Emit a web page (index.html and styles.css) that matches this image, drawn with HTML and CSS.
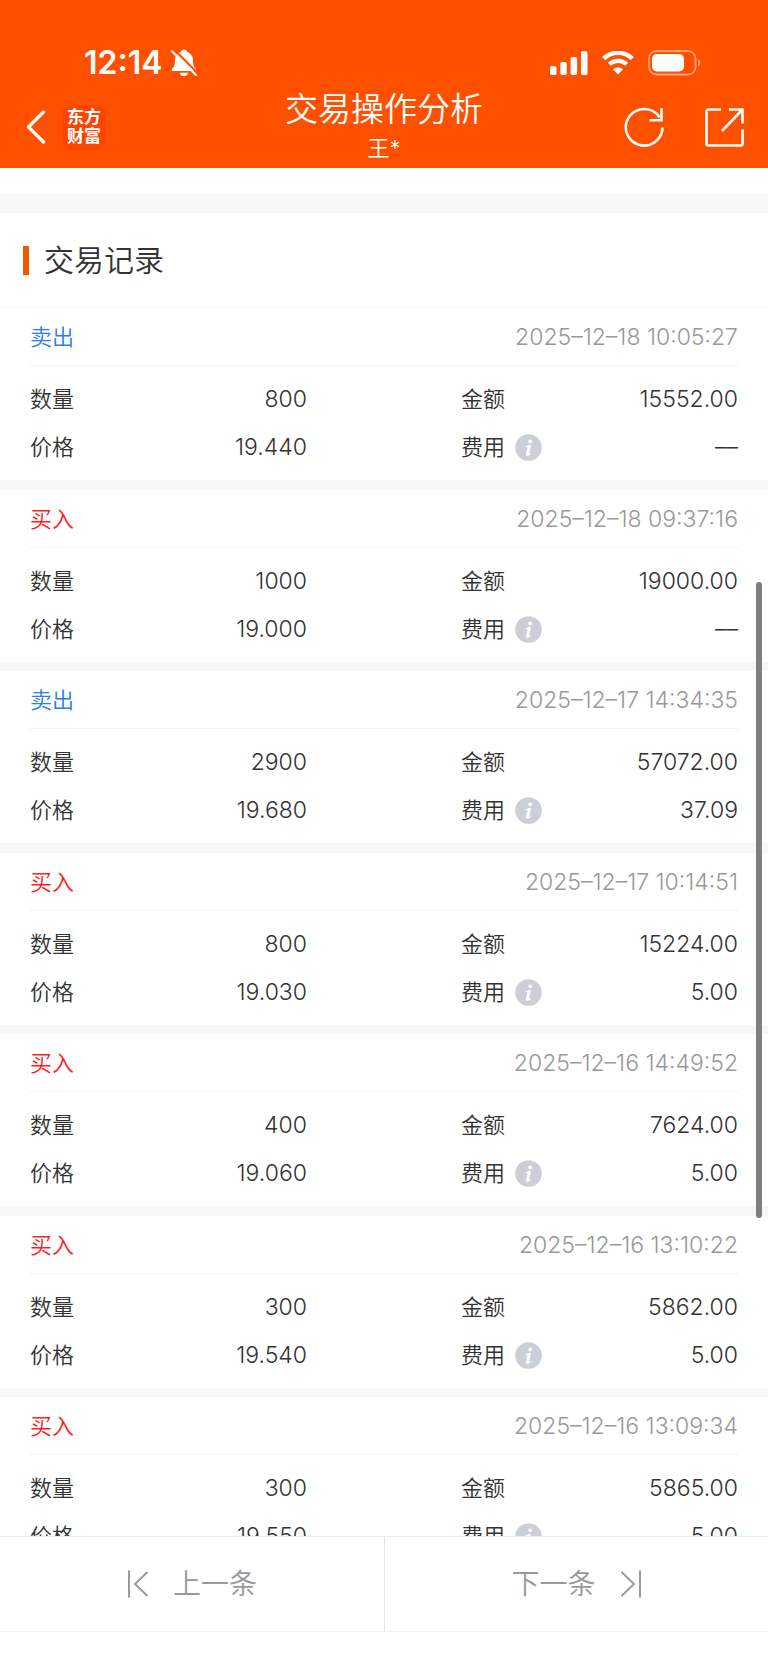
FILE: index.html
```html
<!DOCTYPE html>
<html lang="zh-CN">
<head>
<meta charset="utf-8">
<meta name="viewport" content="width=device-width, initial-scale=1">
<title>交易操作分析</title>
<link rel="stylesheet" href="styles.css">
</head>
<body>
<svg class="defs" width="0" height="0" aria-hidden="true">
  <symbol id="info" viewBox="0 0 27 27">
    <circle cx="13.5" cy="13.5" r="13.3" fill="#cbcfd6"/>
    <circle cx="15.2" cy="7.4" r="1.9" fill="#fff"/>
    <path d="M10.2 12.6c1.5-.9 3.200-1.500 4.500-1.500 1 0 1.300.6 1.100 1.500l-1.700 6.700c-.1.500.1.600.5.400l1.200-.8.500.6c-1.400 1.500-2.800 2.300-4.100 2.300-1.200 0-1.600-.7-1.300-1.900l1.600-6.100c.1-.5 0-.7-.5-.7l-1.600.2z" fill="#fff"/>
  </symbol>
</svg>
<div class="page">
  <header class="top">
    <div class="status">
      <div class="status-left">
        <span class="clock">12:14</span>
        <svg width="26" height="28" viewBox="0 0 26 28" aria-hidden="true">
          <path d="M13 .5c1.700 0 3 1.100 3.200 2.500 3.900 1.300 5.800 4.400 5.800 8.400 0 4.300.8 6.300 2.700 8.300.8.900.4 2.300-.9 2.300H1.900C.6 22 .3 20.600 1.100 19.700 3.200 17.600 4 15.700 4 11.400 4 7.400 5.900 4.300 9.800 3 10 1.600 11.300.5 13 .5z" fill="#fff"/>
          <path d="M8.800 23.700h8.300c-.3 2-2 3.600-4.200 3.600s-3.800-1.600-4.100-3.600z" fill="#fff"/>
          <path d="M2.500 0L26.500 24" stroke="#ff5000" stroke-width="2.200"/>
          <path d="M1 2.200L25 26" stroke="#fff" stroke-width="2.100" stroke-linecap="round"/>
        </svg>
      </div>
      <div class="status-right">
        <svg width="38" height="24" viewBox="0 0 38 24" fill="#fff" aria-hidden="true">
          <rect x="0" y="15" width="6.500" height="9" rx="1.800"/>
          <rect x="10.300" y="11" width="6.500" height="13" rx="1.800"/>
          <rect x="20.600" y="6" width="6.500" height="18" rx="1.800"/>
          <rect x="31" y="0" width="6.500" height="24" rx="1.800"/>
        </svg>
        <svg width="32" height="24" viewBox="0 0 32 24" aria-hidden="true">
          <path d="M1.700 7.600a20.600 20.600 0 0 1 28.600 0" fill="none" stroke="#fff" stroke-width="4.400"/>
          <path d="M7.300 13.300a12.700 12.700 0 0 1 17.400 0" fill="none" stroke="#fff" stroke-width="4.200"/>
          <path d="M16 23.500l-5-5.200c2.900-2.300 7.100-2.300 10 0z" fill="#fff"/>
        </svg>
        <svg width="53" height="26" viewBox="0 0 53 26" aria-hidden="true">
          <rect x="1" y="1" width="46.500" height="23.500" rx="7.500" fill="none" stroke="#fff" stroke-opacity=".45" stroke-width="1.800"/>
          <rect x="4" y="4" width="32" height="17.500" rx="5" fill="#fff"/>
          <path d="M50 9c3 1 3 6.500 0 7.500z" fill="#fff" fill-opacity=".5"/>
        </svg>
      </div>
    </div>
    <div class="nav">
      <div class="nav-side">
        <button class="icon-btn back" type="button" aria-label="返回">
          <svg width="20" height="34" viewBox="0 0 20 34" aria-hidden="true"><path d="M17.500 2L2.500 17l15 15" fill="none" stroke="#fff" stroke-width="3.200" stroke-linecap="round" stroke-linejoin="round"/></svg>
        </button>
        <div class="logo"><span>东方</span><span>财富</span></div>
      </div>
      <div class="nav-title">
        <h1>交易操作分析</h1>
        <p>王*</p>
      </div>
      <div class="nav-side nav-actions">
        <button class="icon-btn" type="button" aria-label="刷新">
          <svg width="40" height="40" viewBox="0 0 40 40" fill="none" stroke="#fff" stroke-width="2.600" aria-hidden="true"><path d="M38.500 20.500A18.300 18.300 0 1 1 35.500 10.200"/><path d="M37.500 1.300v11.900H25.500"/></svg>
        </button>
        <button class="icon-btn" type="button" aria-label="分享">
          <svg width="40" height="40" viewBox="0 0 40 40" fill="none" stroke="#fff" stroke-width="2.600" aria-hidden="true"><path d="M17 2.500H4.500a2 2 0 0 0-2 2V36.500a2 2 0 0 0 2 2H36.500a2 2 0 0 0 2-2V22.500"/><path d="M25 2.500H38.500V16.500M38 3L18 24"/></svg>
        </button>
      </div>
    </div>
  </header>

  <main class="content">
    <div class="spacer"></div>
    <h2 class="section-title">交易记录</h2>
    <div class="records">
      <article class="record">
        <div class="record-head"><span class="sell">卖出</span><time>2025–12–18 10:05:27</time></div>
        <dl>
          <div><dt>数量</dt><dd>800</dd></div>
          <div><dt>金额</dt><dd>15552.00</dd></div>
          <div><dt>价格</dt><dd>19.440</dd></div>
          <div><dt>费用<button class="info" type="button" aria-label="费用说明"><svg><use href="#info"/></svg></button></dt><dd>––</dd></div>
        </dl>
      </article>
      <article class="record">
        <div class="record-head"><span class="buy">买入</span><time>2025–12–18 09:37:16</time></div>
        <dl>
          <div><dt>数量</dt><dd>1000</dd></div>
          <div><dt>金额</dt><dd>19000.00</dd></div>
          <div><dt>价格</dt><dd>19.000</dd></div>
          <div><dt>费用<button class="info" type="button" aria-label="费用说明"><svg><use href="#info"/></svg></button></dt><dd>––</dd></div>
        </dl>
      </article>
      <article class="record">
        <div class="record-head"><span class="sell">卖出</span><time>2025–12–17 14:34:35</time></div>
        <dl>
          <div><dt>数量</dt><dd>2900</dd></div>
          <div><dt>金额</dt><dd>57072.00</dd></div>
          <div><dt>价格</dt><dd>19.680</dd></div>
          <div><dt>费用<button class="info" type="button" aria-label="费用说明"><svg><use href="#info"/></svg></button></dt><dd>37.09</dd></div>
        </dl>
      </article>
      <article class="record">
        <div class="record-head"><span class="buy">买入</span><time>2025–12–17 10:14:51</time></div>
        <dl>
          <div><dt>数量</dt><dd>800</dd></div>
          <div><dt>金额</dt><dd>15224.00</dd></div>
          <div><dt>价格</dt><dd>19.030</dd></div>
          <div><dt>费用<button class="info" type="button" aria-label="费用说明"><svg><use href="#info"/></svg></button></dt><dd>5.00</dd></div>
        </dl>
      </article>
      <article class="record">
        <div class="record-head"><span class="buy">买入</span><time>2025–12–16 14:49:52</time></div>
        <dl>
          <div><dt>数量</dt><dd>400</dd></div>
          <div><dt>金额</dt><dd>7624.00</dd></div>
          <div><dt>价格</dt><dd>19.060</dd></div>
          <div><dt>费用<button class="info" type="button" aria-label="费用说明"><svg><use href="#info"/></svg></button></dt><dd>5.00</dd></div>
        </dl>
      </article>
      <article class="record">
        <div class="record-head"><span class="buy">买入</span><time>2025–12–16 13:10:22</time></div>
        <dl>
          <div><dt>数量</dt><dd>300</dd></div>
          <div><dt>金额</dt><dd>5862.00</dd></div>
          <div><dt>价格</dt><dd>19.540</dd></div>
          <div><dt>费用<button class="info" type="button" aria-label="费用说明"><svg><use href="#info"/></svg></button></dt><dd>5.00</dd></div>
        </dl>
      </article>
      <article class="record">
        <div class="record-head"><span class="buy">买入</span><time>2025–12–16 13:09:34</time></div>
        <dl>
          <div><dt>数量</dt><dd>300</dd></div>
          <div><dt>金额</dt><dd>5865.00</dd></div>
          <div><dt>价格</dt><dd>19.550</dd></div>
          <div><dt>费用<button class="info" type="button" aria-label="费用说明"><svg><use href="#info"/></svg></button></dt><dd>5.00</dd></div>
        </dl>
      </article>
    </div>
    <div class="scroll-thumb"></div>
  </main>

  <nav class="pager">
    <button type="button">
      <svg width="22" height="28" viewBox="0 0 22 28" fill="none" stroke="#999" stroke-width="1.900" aria-hidden="true"><path d="M2 .5v27M20.500 2L8 14l12.500 12"/></svg>
      上一条
    </button>
    <button type="button">
      下一条
      <svg width="22" height="28" viewBox="0 0 22 28" fill="none" stroke="#999" stroke-width="1.900" aria-hidden="true"><path d="M20 .5v27M1.500 2L14 14 1.500 26"/></svg>
    </button>
  </nav>
</div>
</body>
</html>
```
FILE: styles.css
```css
* {
  box-sizing: border-box;
}

body,
h1,
h2,
p,
dl,
dd {
  margin: 0;
}

body {
  background: #fff;
  color: #333;
  font-family: Inter, "Noto Sans CJK SC", sans-serif;
  font-size: 23px;
  font-weight: 350;
  line-height: 32px;
}

button {
  padding: 0;
  border: 0;
  background: none;
  color: inherit;
  font: inherit;
}

svg {
  display: block;
}

.defs {
  position: absolute;
}

.page {
  display: flex;
  flex-direction: column;
  height: 100vh;
  padding-bottom: 38px;
}

.top {
  flex: none;
  padding: 44px 24px 0;
  height: 168px;
  background: #ff5000;
  color: #fff;
}

.status {
  display: flex;
  justify-content: space-between;
  align-items: center;
  height: 38px;
  padding: 0 43px 0 60px;
}

.status-left,
.status-right {
  display: flex;
  align-items: center;
}

.status-left {
  gap: 8px;
}

.status-right {
  gap: 14px;
}

.clock {
  font-size: 32px;
  font-weight: 600;
  line-height: 38px;
}

.nav {
  display: grid;
  grid-template-columns: 1fr auto 1fr;
  align-items: center;
  height: 90px;
}

.nav-side {
  display: flex;
  align-items: center;
  gap: 16px;
}

.nav-actions {
  justify-content: flex-end;
  gap: 40px;
}

.back {
  margin-left: 2px;
}

.logo {
  display: flex;
  flex-direction: column;
  justify-content: center;
  align-items: center;
  width: 44px;
  height: 45px;
  border-radius: 9px;
  background: #ff4400;
  font-size: 17px;
  font-weight: 700;
  line-height: 19px;
}

.nav-title {
  text-align: center;
}

.nav-title h1 {
  font-size: 33px;
  font-weight: 350;
  line-height: 42px;
}

.nav-title p {
  font-size: 22px;
  line-height: 36px;
}

.content {
  position: relative;
  flex: 1;
  min-height: 0;
  overflow: hidden;
}

.spacer {
  height: 19px;
  margin-top: 26px;
  background: #f7f7f7;
}

.section-title {
  display: flex;
  align-items: center;
  gap: 15px;
  height: 95px;
  padding-left: 23px;
  border-bottom: 1px solid #f5f5f5;
  font-size: 30px;
  font-weight: 350;
}

.section-title::before {
  content: "";
  width: 6px;
  height: 29px;
  background: #f05a00;
}

.record {
  border-bottom: 10px solid #f7f7f7;
}

.record:nth-child(even) {
  border-bottom-width: 9px;
}

.record-head {
  display: flex;
  justify-content: space-between;
  align-items: center;
  height: 58px;
  margin: 0 30px;
  border-bottom: 1px solid #f2f2f2;
}

.sell,
.buy {
  font-size: 22px;
}

.sell {
  color: #2b7de9;
}

.buy {
  color: #fb1f1f;
}

time {
  color: #999;
}

dl {
  display: grid;
  grid-template-columns: 1fr 1fr;
  column-gap: 154px;
  padding: 9px 30px;
}

dl > div {
  display: flex;
  justify-content: space-between;
  align-items: center;
  height: 48px;
}

dt {
  display: flex;
  align-items: center;
  gap: 10px;
  font-size: 22px;
}

dd {
  font-weight: 300;
}

.info svg {
  width: 27px;
  height: 27px;
}

.scroll-thumb {
  position: absolute;
  top: 414px;
  right: 6px;
  width: 6px;
  height: 636px;
  border-radius: 3px;
  background: #7f7f7f;
}

.pager {
  display: grid;
  grid-template-columns: 1fr 1fr;
  flex: none;
  height: 96px;
  border-top: 1px solid #ebebeb;
  border-bottom: 1px solid #f2f2f2;
  background: #fff;
  color: #999;
  font-size: 28px;
}

.pager button {
  display: flex;
  justify-content: center;
  align-items: center;
  gap: 24px;
}

.pager button + button {
  border-left: 1px solid #e8e8e8;
}
```
